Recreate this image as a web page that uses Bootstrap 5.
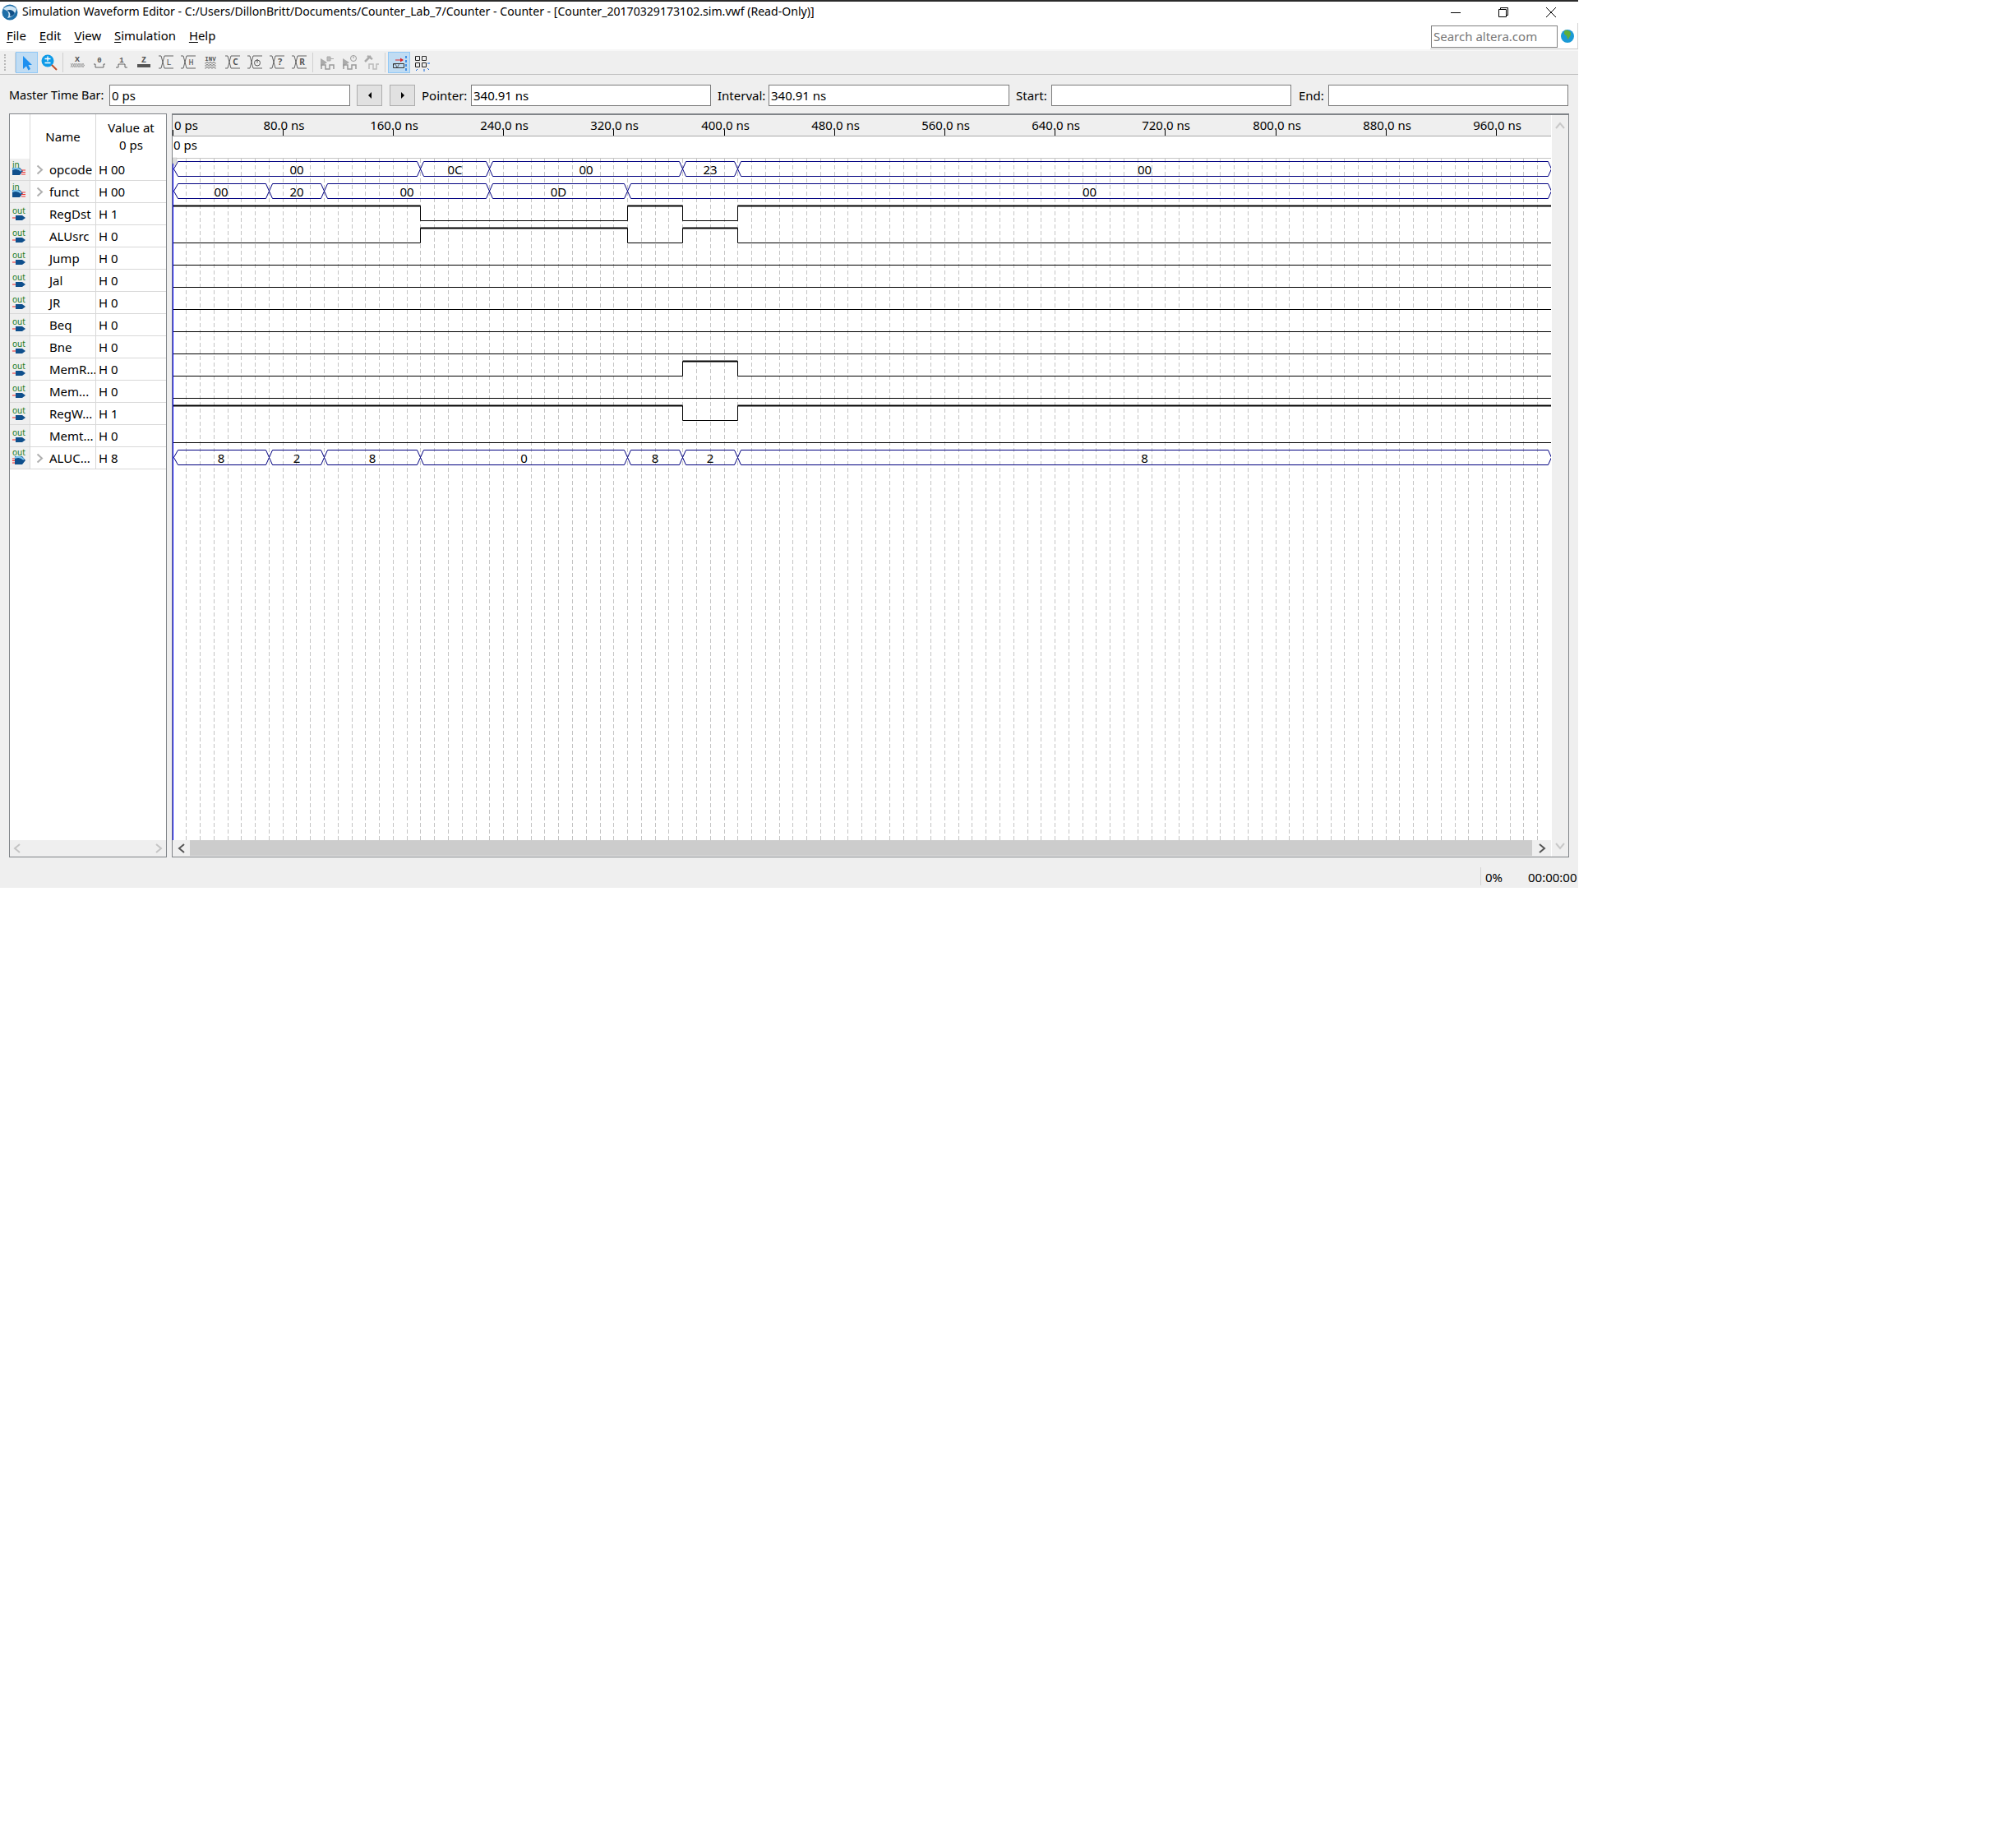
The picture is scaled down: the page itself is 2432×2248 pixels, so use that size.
<!DOCTYPE html>
<html lang="en">

<head>
    <meta charset="UTF-8">
    <meta name="viewport" content="width=device-width, initial-scale=1.0">
    <title>Simulation Waveform Editor</title>
    <link rel="stylesheet" href="https://cdn.jsdelivr.net/npm/bootstrap@5.3.2/dist/css/bootstrap.min.css">
    <style>
        body { background: #fff; font-family: "Noto Sans", "Liberation Sans", sans-serif; font-size: 15px; color: #000; }
        svg text { font-family: "Noto Sans", "Liberation Sans", sans-serif; }
        svg text.qmono { font-family: "Liberation Mono", "DejaVu Sans Mono", monospace; }
        .qwin { width: 1920px; height: 1080px; background: #efefef; }
        .qwin > div { flex: none; }
        .qtitle { height: 28px; background: #fff; border-top: 2px solid #2b2b2b; padding-left: 2px; line-height: 24px; font-size: 14.1px; }
        .qtitle-text { margin-left: 5px; white-space: nowrap; margin-top: -2px; }
        .qwinbtn { width: 58px; height: 24px; }
        .qmenu { height: 34px; background: #fff; border-bottom: 2px solid #f7f7f7; padding-left: 8px; }
        .qmenu-item { margin-right: 16px; line-height: 30px; font-size: 14.9px; }
        .qmenu-item u { text-underline-offset: 2px; }
        .qsearch-wrap { height: 32px; padding-top: 3px; padding-left: 1px; border-right: 1px solid #d4d4d4; border-bottom: 1px solid #c8c8c8; }
        .qsearch { width: 154px; height: 27px; border: 1px solid #808080; border-radius: 0; padding: 0 2px; font-size: 15px; color: #777; line-height: 25px; }
        .qglobe { width: 24px; }
        .qtools { height: 29px; border-bottom: 1px solid #c0c0c0; padding-left: 5px; }
        .qgrip { width: 3px; height: 20px; margin-right: 10px; border-left: 2px dotted #b8b8b8; }
        .qsep { width: 1px; height: 24px; background: #d0d0d0; }
        .qsep-gap { margin: 0 3px; }
        .qtool { width: 27px; height: 26px; }
        .qtool-on { background: #c0dcf3; border: 1px solid #90c8f6; }
        .qctrl { height: 47px; padding: 12px 11px 9px; }
        .qfld.form-control { height: 26px; width: 292px; border: 1px solid #7a7a7a; border-radius: 0; padding: 0 2px; font-size: 15px; color: #000; box-shadow: none; flex: none; }
        .qfld-master.form-control { width: 293px; }
        .qlbl { flex: none; white-space: nowrap; }
        .qlbl-m { width: 122px; font-size: 14.4px; }
        .qlbl-p { width: 60px; margin-left: 8px; }
        .qlbl-i { width: 62px; margin-left: 8px; }
        .qlbl-s { width: 43px; margin-left: 8px; }
        .qlbl-e { width: 36px; margin-left: 9px; }
        .qarrow.btn { width: 31px; height: 26px; padding: 0; border-radius: 0; background: #e1e1e1; border: 1px solid #adadad; margin-left: 8px; }
        .qarrow + .qarrow.btn { margin-left: 9px; }
        .qpanels { height: 905px; padding: 0 11px; }
        .qleft { width: 192px; background: #fff; border: 1px solid #808488; margin-right: 6px; }
        .qright { width: 1700px; border: 1px solid #808488; border-top-width: 2px; }
        .qhead { height: 54px; }
        .qrow { height: 27px; }
        .qc-icon { width: 25px; background: #efefef; border-right: 1px solid #d8d8d8; flex: none; }
        .qhead .qc-icon { background: #fff; }
        .qc-name { width: 80px; border-right: 1px solid #d8d8d8; flex: none; white-space: nowrap; overflow: hidden; }
        .qc-val { width: 85px; flex: none; white-space: nowrap; }
        .qrow > div { border-bottom: 1px solid #d8d8d8; }
        .qrow .qc-name { padding-left: 23px; position: relative; line-height: 26px; }
        .qrow .qc-val { padding-left: 3px; line-height: 26px; }
        .qhead .qc-name, .qhead .qc-val { text-align: center; line-height: 21px; }
        .qchev { position: absolute; left: 7px; top: 7px; }
        .qhscroll { height: 20px; flex: none; }
        .qsb-bg { background: #efefef; }
        .qruler { height: 26px; flex: none; }
        .qruler, .qcanvas { display: block; }
        .qcanvas-wrap { height: 856px; background: #fff; flex: none; overflow: hidden; }
        .qthumb { width: 1633px; height: 19px; background: #ccc; }
        .qsb-btn { width: 21px; }
        .qsb-btn2 { width: 23px; }
        .qvscroll { width: 21px; border-left: 1px solid #fff; flex: none; }
        .qstatus { height: 37px; padding-top: 13px; }
        .qstat-sep { width: 1px; height: 22px; margin-top: -1px; background: #d4d4d4; margin-right: 5px; }
        .qstat-pct { width: 52px; }
        .qstat-time { width: 61px; white-space: nowrap; }
    </style>
</head>

<body>
    <div class="qwin d-flex flex-column">
        <!-- Title bar -->
        <div class="qtitle d-flex align-items-center">
            <svg width="20" height="20" viewBox="0 0 20 20">
                <circle cx="10" cy="10" r="9.5" fill="#1f6fa8" />
                <path d="M2 6C6 1 14 1 18 6C17 12 13 16 7 17C10 13 9 8 2 6Z" fill="#cfe6f5" />
                <path d="M6 8C10 6 14 7 16 11C14 14 12 15 10 15C11 12 10 9 6 8Z" fill="#0f4f86" />
            </svg>
            <span class="qtitle-text flex-grow-1">Simulation Waveform Editor - C:/Users/DillonBritt/Documents/Counter_Lab_7/Counter - Counter - [Counter_20170329173102.sim.vwf (Read-Only)]</span>
            <div class="qwinbtn d-flex align-items-center justify-content-center">
                <svg width="14" height="14"><path d="M1 7.5H13" stroke="#000" /></svg>
            </div>
            <div class="qwinbtn d-flex align-items-center justify-content-center">
                <svg width="14" height="14" fill="none" stroke="#000"><path d="M1.5 3.5H10.5V12.5H1.5ZM3.5 3.5V1.5H12.5V10.5H10.5" /></svg>
            </div>
            <div class="qwinbtn d-flex align-items-center justify-content-center me-1">
                <svg width="14" height="14"><path d="M1 1L13 13M13 1L1 13" stroke="#000" /></svg>
            </div>
        </div>

        <!-- Menu -->
        <div class="qmenu d-flex align-items-start">
            <span class="qmenu-item"><u>F</u>ile</span>
            <span class="qmenu-item"><u>E</u>dit</span>
            <span class="qmenu-item"><u>V</u>iew</span>
            <span class="qmenu-item"><u>S</u>imulation</span>
            <span class="qmenu-item"><u>H</u>elp</span>
            <div class="qsearch-wrap d-flex ms-auto">
                <div class="qsearch">Search altera.com</div>
                <div class="qglobe d-flex justify-content-center pt-1">
                    <svg width="18" height="18" viewBox="0 0 18 18">
                        <circle cx="9" cy="9" r="8" fill="#1b9ad6" />
                        <path d="M6 2C9 1 13 3 13 6C13 9 11 10 10 13C8 12 9 9 7 8C5 7 4 4 6 2Z" fill="#5fae3c" />
                    </svg>
                </div>
            </div>
        </div>

        <!-- Toolbar -->
        <div class="qtools d-flex align-items-center" id="toolbar"></div>

        <!-- Time fields -->
        <div class="qctrl d-flex align-items-center">
            <label class="qlbl qlbl-m">Master Time Bar:</label>
            <input class="form-control qfld qfld-master" value="0 ps" readonly>
            <button class="btn qarrow d-flex align-items-center justify-content-center" type="button">
                <svg width="6" height="10"><path d="M5 1V9L1 5Z" fill="#000" /></svg>
            </button>
            <button class="btn qarrow d-flex align-items-center justify-content-center" type="button">
                <svg width="6" height="10"><path d="M1 1V9L5 5Z" fill="#000" /></svg>
            </button>
            <label class="qlbl qlbl-p">Pointer:</label>
            <input class="form-control qfld" value="340.91 ns" readonly>
            <label class="qlbl qlbl-i">Interval:</label>
            <input class="form-control qfld qfld-master" value="340.91 ns" readonly>
            <label class="qlbl qlbl-s">Start:</label>
            <input class="form-control qfld" readonly>
            <label class="qlbl qlbl-e">End:</label>
            <input class="form-control qfld" readonly>
        </div>

        <!-- Signal list + waveform -->
        <div class="qpanels d-flex">
            <div class="qleft d-flex flex-column">
                <div class="qhead d-flex">
                    <div class="qc-icon"></div>
                    <div class="qc-name d-flex align-items-center justify-content-center">Name</div>
                    <div class="qc-val">
                        <div class="h-100 d-flex align-items-center justify-content-center"><span>Value at<br>0 ps</span></div>
                    </div>
                </div>
                <div id="signalRows"></div>
                <div class="flex-grow-1"></div>
                <div class="qhscroll qsb-bg d-flex justify-content-between align-items-center px-1">
                    <svg width="10" height="12" fill="none" stroke="#c4c4c4" stroke-width="2"><path d="M8 1L2 6L8 11" /></svg>
                    <svg width="10" height="12" fill="none" stroke="#c4c4c4" stroke-width="2"><path d="M2 1L8 6L2 11" /></svg>
                </div>
            </div>
            <div class="qright d-flex">
                <div class="flex-grow-1 d-flex flex-column">
                    <svg class="qruler" id="ruler" width="1677" height="26"></svg>
                    <div class="qcanvas-wrap"><svg class="qcanvas" id="canvas" width="1677" height="856"></svg></div>
                    <div class="qhscroll d-flex align-items-start">
                        <div class="qsb-btn d-flex justify-content-center pt-1">
                            <svg width="10" height="12" fill="none" stroke="#555" stroke-width="2"><path d="M8 1L2 6L8 11" /></svg>
                        </div>
                        <div class="qthumb"></div>
                        <div class="qsb-btn2 d-flex justify-content-center pt-1">
                            <svg width="10" height="12" fill="none" stroke="#555" stroke-width="2"><path d="M2 1L8 6L2 11" /></svg>
                        </div>
                    </div>
                </div>
                <div class="qvscroll d-flex flex-column justify-content-between align-items-center py-2">
                    <svg width="12" height="10" fill="none" stroke="#c8c8c8" stroke-width="2"><path d="M1 8L6 2L11 8" /></svg>
                    <svg width="12" height="10" fill="none" stroke="#c8c8c8" stroke-width="2"><path d="M1 2L6 8L11 2" /></svg>
                </div>
            </div>
        </div>

        <!-- Status bar -->
        <div class="qstatus d-flex justify-content-end align-items-start">
            <div class="qstat-sep"></div>
            <div class="qstat-pct">0%</div>
            <div class="qstat-time">00:00:00</div>
        </div>
    </div>

    <script src="https://cdn.jsdelivr.net/npm/bootstrap@5.3.2/dist/js/bootstrap.bundle.min.js"></script>
    <script>
        // x tool: crossing bus lines with a letter in the right half
        function busIcon(inner, col) {
            return `<path d="M3 4H6L10 19H21M3 19H6L10 4H21" fill="none" stroke="${col}" stroke-width=".9" />${inner}`;
        }
        function letter(ch, x, y, size, col, weight, cls) {
            return `<text class="${cls || ""}" x="${x}" y="${y}" font-size="${size}" font-weight="${weight}" text-anchor="middle" fill="${col}">${ch}</text>`;
        }
        const grey = "#555";
        const waveDim = `<path d="M5 20V15H10V20H15V15H20V20" fill="none" stroke="#999" stroke-width="1.5" />`;
        const tools = [
            { on: true, d: `<path d="M7 4V20L11 16.5L13.5 21.5L16 20L13.5 15H18Z" fill="#1e90f0" />` },
            { d: `<circle cx="10" cy="10" r="7.5" fill="#0f9be8" /><path d="M6.5 7.5H13.5M10 4.5V10.5M6.5 12.5H13.5" stroke="#fff" stroke-width="1.3" /><path d="M15 15L21 21" stroke="#c0502a" stroke-width="2" />` },
            { sep: true },
            { d: letter("X", 12, 11, 9, grey, 700) + `<path d="M4 13L6.5 18L9 13L11.5 18L14 13L16.5 18L19 13L20.5 16M4 18L6.5 13L9 18L11.5 13L14 18L16.5 13L19 18L20.5 15" fill="none" stroke="#888" stroke-width=".7" />` },
            { d: letter("0", 12, 12, 9, grey, 700, "qmono") + `<path d="M5 14H7V18H17V14H19" fill="none" stroke="${grey}" stroke-width=".9" />` },
            { d: letter("1", 12, 12, 9, grey, 700, "qmono") + `<path d="M5 18H8V14H16V18H19" fill="none" stroke="${grey}" stroke-width=".9" />` },
            { d: letter("Z", 12, 12, 10, grey, 700, "qmono") + `<rect x="4" y="14" width="16" height="4" fill="${grey}" />` },
            { d: busIcon(letter("L", 15.5, 15, 10, grey, 400, "qmono"), grey) },
            { d: busIcon(letter("H", 15.5, 15, 10, grey, 400, "qmono"), grey) },
            { d: letter("INV", 12, 10, 7.5, grey, 700, "qmono") + `<path d="M5 13H7V11.5H9V13H11V11.5H13V13H15V11.5H17V13H19M5 16H7V14.5H9V16H11V14.5H13V16H15V14.5H17V16H19M5 19H7V17.5H9V19H11V17.5H13V19H15V17.5H17V19H19" fill="none" stroke="${grey}" stroke-width=".6" />` },
            { d: busIcon(letter("C", 15.5, 15, 10, grey, 700), grey) },
            { d: busIcon(`<circle cx="15" cy="12.5" r="3.5" fill="none" stroke="${grey}" /><path d="M15 8V12.5" stroke="${grey}" />`, grey) },
            { d: busIcon(letter("?", 15.5, 15, 11, grey, 700), grey) },
            { d: busIcon(letter("R", 15.5, 15, 10, grey, 700), grey) },
            { sep: true },
            { d: `<path d="M4 7L12 12L4 17Z" fill="#aaa" /><path d="M12 5H16V10H12ZM16 7.5H20" fill="#bbb" stroke="#aaa" />` + waveDim },
            { d: `<path d="M4 7L12 12L4 17Z" fill="#aaa" /><circle cx="17" cy="7" r="3.5" fill="none" stroke="#999" /><path d="M17 4.5V7" stroke="#999" />` + waveDim },
            { d: `<path d="M4 11L11 4M7 4L13 8" stroke="#aaa" stroke-width="2.5" /><path d="M9 20V14H14V20H18V14H21" fill="none" stroke="#bbb" stroke-width="1.5" />` },
            { sep: true },
            { on: true, d: `<path d="M7 9H16" stroke="#d22" /><path d="M13 6.5L17 9L13 11.5Z" fill="#d22" /><path d="M4.5 13.5H17.5V18.5H4.5Z" fill="none" stroke="#333" /><path d="M4 16L7 13L9 19L12 13" fill="none" stroke="#333" stroke-width=".7" /><path d="M20 4V22" stroke="#06d" stroke-dasharray="3 2" stroke-width="1.3" />` },
            { d: `<path d="M4.5 4.5H9.5V9.5H4.5ZM12.5 4.5H17.5V9.5H12.5ZM4.5 12.5H9.5V17.5H4.5ZM12.5 12.5H17.5V17.5H12.5Z" fill="none" stroke="#222" /><path d="M19 13H22M7 20L5 22M15 20V23M19 19L21 21" stroke="#16d" />` }
        ];

        const toolbar = document.getElementById("toolbar");
        toolbar.innerHTML = `<div class="qgrip"></div><div class="qsep"></div>`;
        tools.forEach(t => {
            if (t.sep) {
                toolbar.insertAdjacentHTML("beforeend", `<div class="qsep qsep-gap"></div>`);
            } else {
                toolbar.insertAdjacentHTML("beforeend",
                    `<div class="qtool d-flex align-items-center justify-content-center ${t.on ? "qtool-on" : ""}"><svg width="24" height="24" viewBox="0 0 24 24">${t.d}</svg></div>`);
            }
        });

        // Signals, times in ns
        const signals = [
            { name: "opcode", value: "H 00", kind: "busIn", bus: [[0, "00"], [180, "0C"], [230, "00"], [370, "23"], [410, "00"]] },
            { name: "funct", value: "H 00", kind: "busIn", bus: [[0, "00"], [70, "20"], [110, "00"], [230, "0D"], [330, "00"]] },
            { name: "RegDst", value: "H 1", kind: "out", bit: [[0, 1], [180, 0], [330, 1], [370, 0], [410, 1]] },
            { name: "ALUsrc", value: "H 0", kind: "out", bit: [[0, 0], [180, 1], [330, 0], [370, 1], [410, 0]] },
            { name: "Jump", value: "H 0", kind: "out", bit: [[0, 0]] },
            { name: "Jal", value: "H 0", kind: "out", bit: [[0, 0]] },
            { name: "JR", value: "H 0", kind: "out", bit: [[0, 0]] },
            { name: "Beq", value: "H 0", kind: "out", bit: [[0, 0]] },
            { name: "Bne", value: "H 0", kind: "out", bit: [[0, 0]] },
            { name: "MemR...", value: "H 0", kind: "out", bit: [[0, 0], [370, 1], [410, 0]] },
            { name: "Mem...", value: "H 0", kind: "out", bit: [[0, 0]] },
            { name: "RegW...", value: "H 1", kind: "out", bit: [[0, 1], [370, 0], [410, 1]] },
            { name: "Memt...", value: "H 0", kind: "out", bit: [[0, 0]] },
            { name: "ALUC...", value: "H 8", kind: "busOut", bus: [[0, "8"], [70, "2"], [110, "8"], [180, "0"], [330, "8"], [370, "2"], [410, "8"]] }
        ];

        const pinIcons = {
            busIn: `<text x="3" y="11" font-size="10" fill="#1a7a1a">in</text>
                    <path d="M3 11H12L16 15L12 20H3Z" fill="#0f4f8c" /><path d="M3 13C7 11 11 12 14 15" fill="none" stroke="#7cc4ee" stroke-width="2" />
                    <path d="M14 14H19M14 16.5H19M14 19H19" stroke="#e33" />`,
            out: `<text x="3" y="13" font-size="10" fill="#1a7a1a">out</text>
                  <path d="M3 18H7" stroke="#e22" /><path d="M7 15H15L19 18L15 21H7Z" fill="#0f4f8c" />`,
            busOut: `<text x="3" y="10" font-size="10" fill="#1a7a1a">out</text>
                     <path d="M3 14H7M3 16.5H7M3 19H7" stroke="#e22" /><path d="M6 11H15L19 16L15 21H6Z" fill="#0f4f8c" /><path d="M6 13C10 11 14 12 17 15" fill="none" stroke="#7cc4ee" stroke-width="2" />`
        };

        const rowsBox = document.getElementById("signalRows");
        signals.forEach(s => {
            const chev = s.bus ? `<svg class="qchev" width="9" height="13" fill="none" stroke="#b0b0b0" stroke-width="2"><path d="M1.5 1.5L7 6.5L1.5 11.5" /></svg>` : "";
            rowsBox.insertAdjacentHTML("beforeend", `
                <div class="qrow d-flex">
                    <div class="qc-icon"><svg width="24" height="26">${pinIcons[s.kind]}</svg></div>
                    <div class="qc-name">${chev}${s.name}</div>
                    <div class="qc-val">${s.value}</div>
                </div>`);
        });

        // Waveform drawing
        const x = t => Math.floor(t * 1.6775) + 0.5;
        const END = 1000;
        const TOP = 166;
        let ruler = "", svg = "";

        for (let t = 0; t <= 960; t += 80) {
            const label = t === 0 ? "0 ps" : t.toFixed(1) + " ns";
            ruler += t === 0
                ? `<text x="2" y="18" font-size="15">${label}</text>`
                : `<text x="${x(t) + 1}" y="18" font-size="15" text-anchor="middle">${label}</text>`;
            ruler += `<path d="M${x(t)} 18V25" stroke="#000" />`;
        }
        ruler += `<path d="M0 25.5H1677" stroke="#a8a8a8" />`;
        document.getElementById("ruler").innerHTML = ruler;

        svg += `<text x="1" y="16" font-size="15">0 ps</text>`;
        svg += `<path d="M0 26.5H1677" stroke="#c4c4c4" />`;
        for (let t = 10; t <= END; t += 10) {
            svg += `<path d="M${x(t)} 27V856" stroke="#c4c4c4" stroke-dasharray="5 3" />`;
        }

        signals.forEach((s, i) => {
            const rowTop = 193 + 27 * i - TOP;
            const hi = rowTop + 3.5;
            const lo = rowTop + 21.5;
            if (s.bus) {
                s.bus.forEach((seg, j) => {
                    const a = x(seg[0]);
                    const b = x(j + 1 < s.bus.length ? s.bus[j + 1][0] : END);
                    const mid = (hi + lo) / 2;
                    const left = j === 0 ? a + 1 : a;
                    const inset = j === 0 ? a + 6 : a + 4;
                    svg += `<path d="M${left} ${mid}L${inset} ${hi}H${b - 4}L${b} ${mid}L${b - 4} ${lo}H${inset}Z" fill="none" stroke="#000080" />`;
                    svg += `<text x="${(a + b) / 2}" y="${rowTop + 19}" font-size="15" text-anchor="middle">${seg[1]}</text>`;
                });
            } else {
                s.bit.forEach((seg, j) => {
                    const a = x(seg[0]);
                    const b = x(j + 1 < s.bit.length ? s.bit[j + 1][0] : END);
                    const y = seg[1] ? hi : lo;
                    svg += `<path d="M${a} ${y}H${b}" stroke="#000" stroke-width="${seg[1] ? 2 : 1}" />`;
                    if (j > 0) svg += `<path d="M${a} ${hi}V${lo}" stroke="#000" />`;
                });
            }
        });

        svg += `<path d="M0.5 27V856" stroke="#0000ff" />`;
        svg += `<path d="M0 26H5V32L2.5 36L0 32Z" fill="#ddd" stroke="#bbb" stroke-width=".5" />`;
        document.getElementById("canvas").innerHTML = svg;
    </script>
</body>

</html>
